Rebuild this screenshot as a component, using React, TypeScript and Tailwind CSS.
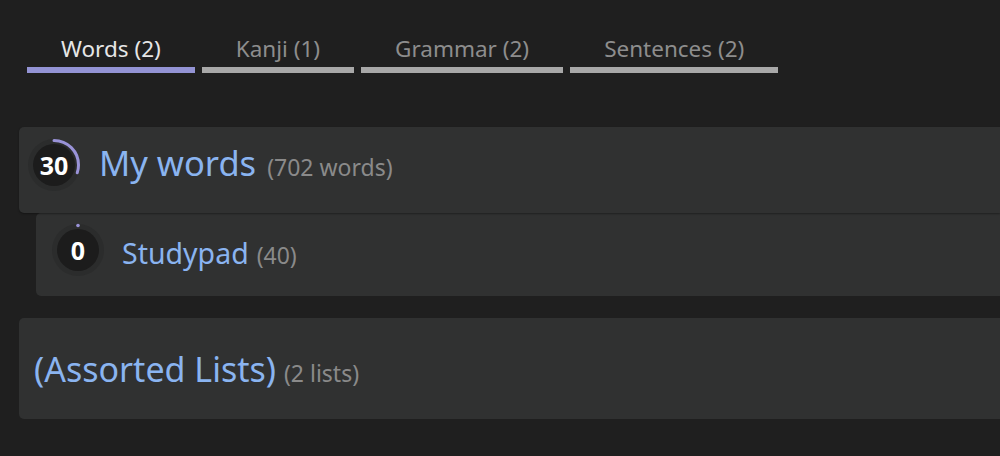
import React from "react";

const tabs = [
  { label: "Words (2)", active: true },
  { label: "Kanji (1)", active: false },
  { label: "Grammar (2)", active: false },
  { label: "Sentences (2)", active: false },
];

function Progress({ value, pct }: { value: number; pct: number }) {
  const r = 24.5;
  const c = 2 * Math.PI * r;
  return (
    <div className="relative w-[54px] h-[54px] shrink-0">
      <svg width="54" height="54" viewBox="0 0 54 54" className="absolute inset-0">
        <circle cx="27" cy="27" r="26" fill="#2b2c2c" />
        <circle cx="27" cy="27" r="21" fill="#1c1c1c" />
        {pct > 0 ? (
          <circle
            cx="27"
            cy="27"
            r={r}
            fill="none"
            stroke="#9a93d8"
            strokeWidth="3"
            strokeLinecap="round"
            strokeDasharray={`${(c * pct) / 100} ${c}`}
            transform="rotate(-90 27 27)"
          />
        ) : (
          <circle cx="27" cy="2.5" r="1.8" fill="#9a93d8" />
        )}
      </svg>
      <span className="absolute inset-0 flex items-center justify-center text-white font-bold text-[25px] leading-none">
        {value}
      </span>
    </div>
  );
}

export default function App() {
  return (
    <div
      className="w-full h-[456px] bg-[#1f1f1f] overflow-hidden"
      style={{ fontFamily: '"Noto Sans", "Open Sans", sans-serif' }}
    >
      <div className="flex gap-[7px] pl-[27px] pt-[35px]">
        {tabs.map((t) => (
          <div
            key={t.label}
            className={`px-[34px] pb-[5px] text-[22.5px] leading-[27px] border-b-[6px] ${
              t.active ? "text-[#e6e6e6] border-[#9393d4]" : "text-[#8d8d8d] border-[#a8a8a8]"
            }`}
          >
            {t.label}
          </div>
        ))}
      </div>

      <div className="mt-[54px]">
        <div className="relative z-10 ml-[19px] h-[86px] bg-[#303131] rounded-l-[5px] pl-[8px] pt-[11px] shadow-[0_1px_2px_rgba(0,0,0,0.35)]">
          <div className="flex items-center gap-[18px]">
            <Progress value={30} pct={30} />
            <div className="flex items-baseline gap-[11px] -mt-[4px]">
              <span className="text-[#8ab4f0] text-[34.5px] leading-none">My words</span>
              <span className="text-[#8a8a8a] text-[23px] leading-none">(702 words)</span>
            </div>
          </div>
        </div>

        <div className="ml-[36px] h-[83px] bg-[#303131] rounded-bl-[5px] rounded-tl-[5px] pl-[15px] pt-[10px]">
          <div className="flex items-center gap-[17px]">
            <Progress value={0} pct={0} />
            <div className="flex items-baseline gap-[8px] mt-[6px]">
              <span className="text-[#8ab4f0] text-[28.5px] leading-none">Studypad</span>
              <span className="text-[#8a8a8a] text-[23px] leading-none">(40)</span>
            </div>
          </div>
        </div>

        <div className="mt-[22px] ml-[19px] h-[101px] bg-[#303131] rounded-l-[5px] pl-[15px] flex items-center">
          <div className="flex items-baseline gap-[8px]">
            <span className="text-[#8ab4f0] text-[34px] leading-none">(Assorted Lists)</span>
            <span className="text-[#8a8a8a] text-[23px] leading-none">(2 lists)</span>
          </div>
        </div>
      </div>
    </div>
  );
}
